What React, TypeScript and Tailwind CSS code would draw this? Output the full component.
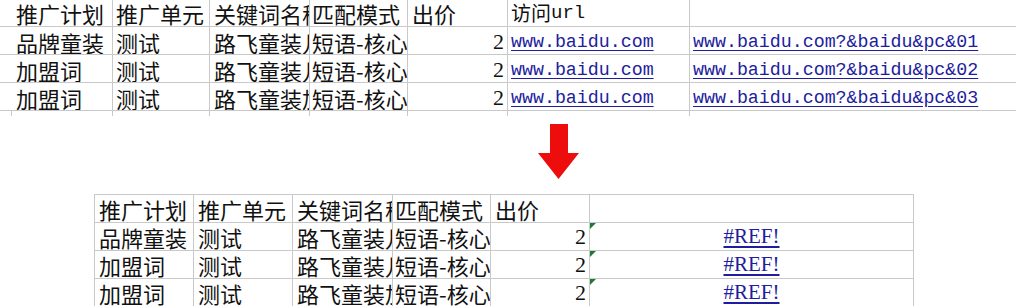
const cjk = "font-['Noto_Sans_CJK_SC',sans-serif]";
const mono = "font-['Liberation_Mono','Noto_Sans_CJK_SC',monospace]";
const serif = "font-['Liberation_Serif',serif]";

const topCols = ["w-[113px] pl-[16px]", "w-[97px] pl-[3px]", "w-[100px] pl-[4px]", "w-[98px] pl-[2px]", "w-[100px] pl-[4px]", "w-[182px] pl-[3px]", "w-[326px] pl-[3px]"];
const botCols = ["w-[100px] border-l pl-[4px]", "w-[99px] pl-[4px]", "w-[100px] pl-[4px]", "w-[98px] pl-[2px]", "w-[99px] pl-[4px]", "w-[324px]"];

const header = ["推广计划", "推广单元", "关键词名称", "匹配模式", "出价"];
const rows = [
  { plan: "品牌童装", unit: "测试", kw: "路飞童装儿童", n: "01" },
  { plan: "加盟词", unit: "测试", kw: "路飞童装儿童", n: "02" },
  { plan: "加盟词", unit: "测试", kw: "路飞童装加盟", n: "03" },
];

function Cell({ w, className = "", children }: { w: string; className?: string; children?: React.ReactNode }) {
  return (
    <div className={`relative flex shrink-0 items-center overflow-hidden whitespace-nowrap border-r border-b border-[#c9c9c9] ${w} ${className}`}>
      {children}
    </div>
  );
}

function TopTable() {
  return (
    <div className={`text-[22px] leading-none text-[#111] ${cjk}`}>
      <div className="flex h-[27px]">
        {header.map((h, i) => (
          <Cell key={h} w={topCols[i]}>{h}</Cell>
        ))}
        <Cell w={topCols[5]} className={`text-[20px] ${cjk}`}>
          访问<span className={`${mono} text-[19px]`}>url</span>
        </Cell>
        <Cell w={topCols[6]} className="border-r-0" />
      </div>
      {rows.map((r) => (
        <div key={r.n} className="flex h-[28px] [&>div]:pt-[3px]">
          <Cell w={topCols[0]}>{r.plan}</Cell>
          <Cell w={topCols[1]}>{r.unit}</Cell>
          <Cell w={topCols[2]}>{r.kw}</Cell>
          <Cell w={topCols[3]}>短语-核心词</Cell>
          <Cell w={topCols[4]} className={`justify-end pr-[3px] ${serif}`}>2</Cell>
          <Cell w={topCols[5]} className={`${mono} text-[18.3px] text-[#1d1d9e] underline underline-offset-[3px]`}>www.baidu.com</Cell>
          <Cell w={topCols[6]} className={`border-r-0 ${mono} text-[18.3px] text-[#1d1d9e] underline underline-offset-[3px]`}>
            www.baidu.com?&amp;baidu&amp;pc&amp;{r.n}
          </Cell>
        </div>
      ))}
      <div className="flex h-[5px]">
        <div className="w-[12px] shrink-0 border-r border-[#c9c9c9]" />
        <div className="w-[101px] shrink-0 border-r border-[#c9c9c9]" />
        <div className="w-[97px] shrink-0 border-r border-[#c9c9c9]" />
        <div className="w-[100px] shrink-0 border-r border-[#c9c9c9]" />
        <div className="w-[98px] shrink-0 border-r border-[#c9c9c9]" />
        <div className="w-[100px] shrink-0 border-r border-[#c9c9c9]" />
        <div className="w-[182px] shrink-0 border-r border-[#c9c9c9]" />
      </div>
    </div>
  );
}

function Arrow() {
  return (
    <div className="flex h-[78px] items-start pl-[538px] pt-[8px]">
      <svg width="41" height="55" viewBox="0 0 41 55">
        <path d="M12 0 H30 V29 H41 L20.5 55 L0 29 H12 Z" fill="#ee0d0d" />
      </svg>
    </div>
  );
}

function BottomTable() {
  return (
    <div className={`ml-[94px] text-[22px] leading-none text-[#111] ${cjk}`}>
      <div className="flex h-[29px] border-t border-[#c9c9c9] w-max">
        {header.map((h, i) => (
          <Cell key={h} w={botCols[i]}>{h}</Cell>
        ))}
        <Cell w={botCols[5]} />
      </div>
      {rows.map((r) => (
        <div key={r.n} className="flex h-[28px]">
          <Cell w={botCols[0]}>{r.plan}</Cell>
          <Cell w={botCols[1]}>{r.unit}</Cell>
          <Cell w={botCols[2]}>{r.kw}</Cell>
          <Cell w={botCols[3]}>短语-核心词</Cell>
          <Cell w={botCols[4]} className={`justify-end pr-[3px] ${serif}`}>2</Cell>
          <Cell w={botCols[5]} className={`justify-center ${serif} text-[21px] text-[#1d1d9e]`}>
            <span className="absolute left-0 top-0 h-0 w-0 border-t-[6px] border-r-[6px] border-t-[#1f7a3a] border-r-transparent" />
            <span className="underline underline-offset-[3px]">#REF!</span>
          </Cell>
        </div>
      ))}
    </div>
  );
}

export default function App() {
  return (
    <div className="h-[306px] w-[1034px] overflow-hidden bg-white">
      <TopTable />
      <Arrow />
      <BottomTable />
    </div>
  );
}
